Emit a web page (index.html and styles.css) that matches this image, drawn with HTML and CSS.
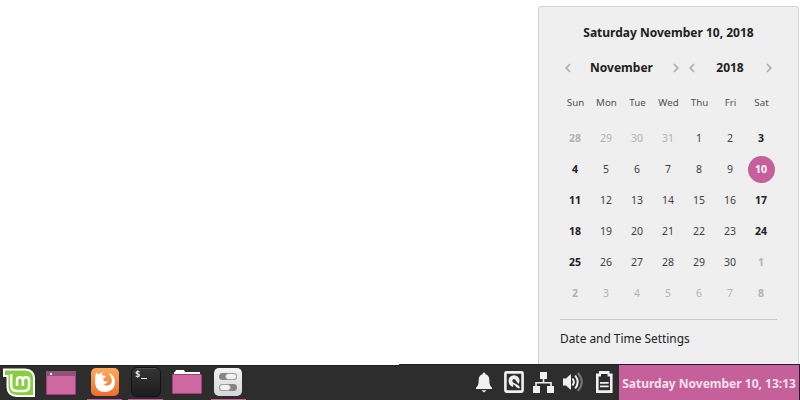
FILE: index.html
```html
<!DOCTYPE html>
<html lang="en">
<head>
<meta charset="utf-8">
<title>Desktop</title>
<link rel="stylesheet" href="styles.css">
</head>
<body>
<main class="desktop">
  <section class="calendar">
    <h1 class="today">Saturday November 10, 2018</h1>
    <div class="pickers">
      <div class="picker month">
        <svg class="chev" viewBox="0 0 6 10"><path d="M5 1 1.2 5 5 9"/></svg>
        <span>November</span>
        <svg class="chev" viewBox="0 0 6 10"><path d="M1 1 4.8 5 1 9"/></svg>
      </div>
      <div class="picker year">
        <svg class="chev" viewBox="0 0 6 10"><path d="M5 1 1.2 5 5 9"/></svg>
        <span>2018</span>
        <svg class="chev" viewBox="0 0 6 10"><path d="M1 1 4.8 5 1 9"/></svg>
      </div>
    </div>
    <div class="weekdays">
      <span>Sun</span><span>Mon</span><span>Tue</span><span>Wed</span><span>Thu</span><span>Fri</span><span>Sat</span>
    </div>
    <div class="days">
      <b class="other">28</b><span class="other">29</span><span class="other">30</span><span class="other">31</span><span>1</span><span>2</span><b>3</b>
      <b>4</b><span>5</span><span>6</span><span>7</span><span>8</span><span>9</span><b class="selected">10</b>
      <b>11</b><span>12</span><span>13</span><span>14</span><span>15</span><span>16</span><b>17</b>
      <b>18</b><span>19</span><span>20</span><span>21</span><span>22</span><span>23</span><b>24</b>
      <b>25</b><span>26</span><span>27</span><span>28</span><span>29</span><span>30</span><b class="other">1</b>
      <b class="other">2</b><span class="other">3</span><span class="other">4</span><span class="other">5</span><span class="other">6</span><span class="other">7</span><b class="other">8</b>
    </div>
    <div class="settings">Date and Time Settings</div>
  </section>
</main>
<footer class="taskbar">
  <div class="launchers">
    <svg viewBox="0 0 40 35" width="40" height="35">
      <path d="M3 3.5H25Q35 4 35 13V32H17Q6.5 31.5 6.5 22V12H3Z" fill="#fff"/>
      <path d="M5 5.5H25Q33 6 33 13V30H17Q8.5 29.5 8.5 22V10H5Z" fill="#87cf3e"/>
      <path d="M11.2 9V20.5Q11.2 26 17 26H24Q29 26 29 21V15.5Q29 12.3 26 12.3T22.9 15.5V21M22.9 15.5Q22.9 12.3 20 12.3T17 15.5V21" fill="none" stroke="#fff" stroke-width="2.5"/>
    </svg>
    <svg viewBox="0 0 43 35" width="43" height="35">
      <path d="M6.5 6.5H35.5V29.5H6.5Z" fill="#cd69a0" stroke="#a23c76"/>
      <path d="M6 6H36V11H6Z" fill="#92507a"/><path d="M10 8H12V10H10Z" fill="#fff"/>
    </svg>
    <svg class="running" viewBox="0 0 42 34" width="42" height="34">
      <defs><linearGradient id="orange" x2="0" y2="1"><stop stop-color="#ffac59"/><stop offset="1" stop-color="#ed6d2f"/></linearGradient></defs>
      <rect x="8" y="3" width="28" height="28" rx="5" fill="url(#orange)"/>
      <path d="M13 7.3 15.6 9.4Q17.4 7.8 20 7.5Q18.8 9 19.2 10.5L23 11Q23 12.4 20.4 13.2Q20 16 22.5 16.6L25 16.5Q23.5 19 20.5 19Q23.5 22 27 19.5Q30 17 28 12.2L25.8 7.7Q32.2 10.5 32 17.5Q31.5 26.7 22 27Q12.7 26.8 12 17.4Q11.8 12.5 13 7.3Z" fill="#fff"/>
    </svg>
    <svg class="running" viewBox="0 0 41 34" width="41" height="34">
      <defs><linearGradient id="black" x2="0" y2="1"><stop stop-color="#353535"/><stop offset="1" stop-color="#1c1c1c"/></linearGradient></defs>
      <rect x="6.5" y="2.5" width="29" height="29" rx="5.5" fill="url(#black)" stroke="#111"/>
      <path d="M11 3.5H31" stroke="#505050"/>
      <text x="10" y="12" class="prompt">$</text><path d="M16 13.5H22" stroke="#eee"/>
    </svg>
    <svg viewBox="0 0 41 35" width="41" height="35">
      <path d="M8 12V7H9L10 5H18L19 7H34V12Z" fill="#fff"/>
      <path d="M6.5 9.5H35.5V28.5H6.5Z" fill="#cd69a0" stroke="#a83b79" stroke-linejoin="round"/>
    </svg>
    <svg class="running" viewBox="0 0 42 34" width="42" height="34">
      <defs><linearGradient id="silver" x2="0" y2="1"><stop stop-color="#f3f3f3"/><stop offset="1" stop-color="#d7d7d7"/></linearGradient></defs>
      <rect x="7" y="3" width="28" height="28" rx="5" fill="url(#silver)"/>
      <rect x="12" y="8" width="18" height="7" rx="3.5" fill="#858585"/><rect x="18.5" y="8.5" width="11" height="6" rx="3" fill="#f2f2f2" stroke="#929292" stroke-width=".7"/>
      <rect x="12" y="19" width="18" height="7" rx="3.5" fill="#858585"/><rect x="12.5" y="19.5" width="11" height="6" rx="3" fill="#f2f2f2" stroke="#929292" stroke-width=".7"/>
    </svg>
  </div>
  <div class="tray">
    <svg viewBox="0 0 30 35" width="30" height="35" fill="#f0f0f0">
      <path d="M15 7.5Q16.5 7.5 16.5 9.3Q20.3 10.4 20.3 15Q20.3 21 23 22.5V24H7V22.5Q9.7 21 9.7 15Q9.7 10.4 13.5 9.3Q13.5 7.5 15 7.5ZM12.3 25.3H17.7L15 27.5Z"/>
    </svg>
    <svg viewBox="0 0 30 35" width="30" height="35">
      <rect x="6.4" y="7.4" width="17.2" height="19.2" rx="1" fill="none" stroke="#f0f0f0" stroke-width="2.6"/>
      <path d="M14 22Q9.5 20.5 9.5 15.5Q10 10.5 15 10.2Q20 10.5 20.6 15.5Q20.3 17.5 19.5 19L16 14.5Q14.5 13.5 13.5 15Q13 16.5 14.2 17.5L19.7 20.5L21 22.7L20 23.5L17.5 22.3L14.5 19Z" fill="#f0f0f0"/>
    </svg>
    <svg viewBox="0 0 30 35" width="30" height="35">
      <path d="M11 7H18V14H11ZM4 21H11V28H4ZM18 21H25V28H18Z" fill="#f0f0f0"/>
      <path d="M14.5 12V18M7 22V17.8H22V22" fill="none" stroke="#f0f0f0" stroke-width="1.6"/>
    </svg>
    <svg viewBox="0 0 30 35" width="30" height="35" fill="none" stroke="#f0f0f0" stroke-width="2">
      <path d="M4 13.5H7L12 9V25L7 20.5H4Z" fill="#f0f0f0" stroke="none"/>
      <path d="M13.5 13.5Q16.2 17 13.5 20.5M16.2 10.5Q21.2 17 16.2 23.5"/><path d="M18.8 8Q26.8 17 18.8 26" stroke="#777"/>
    </svg>
    <svg viewBox="0 0 30 35" width="30" height="35" fill="#f0f0f0">
      <path fill-rule="evenodd" d="M10 6H20.5V8.5H23.6V28H7V8.5H10ZM9.6 11.5V25.3H21V11.5H18.5V9H12V11.5Z"/>
      <path d="M11 17H19.7V18.7H11ZM11 20.5H19.7V22.2H11Z"/>
    </svg>
  </div>
  <div class="clock">Saturday November 10, 13:13</div>
</footer>
</body>
</html>
```
FILE: styles.css
```css
* { box-sizing: border-box; }
body {
  margin: 0;
  width: 800px;
  height: 400px;
  overflow: hidden;
  display: flex;
  flex-direction: column;
  background: #fff;
  font-family: "Noto Sans", sans-serif;
}
.desktop {
  height: 364px;
  padding: 6px 1px 0 0;
  display: flex;
  justify-content: flex-end;
}
.calendar {
  width: 261px;
  height: 358px;
  padding: 16px 21px 0;
  background: #efefef;
  border: 1px solid #d3d3d3;
  border-bottom: 0;
  border-radius: 3px 3px 0 0;
  color: #202020;
}
.today {
  margin: 0;
  font-size: 12px;
  line-height: 20px;
  text-align: center;
  white-space: nowrap;
}
.pickers {
  height: 20px;
  margin-top: 15px;
  display: flex;
  gap: 10px;
  padding: 0 5px;
  font-size: 12px;
  line-height: 20px;
  font-weight: bold;
}
.picker {
  display: flex;
  justify-content: space-between;
  align-items: center;
}
.picker span { margin-left: -1px; }
.month { width: 114px; }
.year { width: 83px; }
.chev {
  width: 6px;
  height: 10px;
  fill: none;
  stroke: #adadad;
  stroke-width: 1.7;
}
.weekdays, .days {
  display: grid;
  grid-template-columns: repeat(7, 31px);
  text-align: center;
}
.weekdays {
  margin-top: 15px;
  font-size: 9.75px;
  line-height: 20px;
  color: #505050;
}
.days {
  margin-top: 10px;
  grid-auto-rows: 31px;
  font-size: 10.5px;
  line-height: 31px;
  color: #404040;
}
.days > * { padding-right: 1px; }
.days b { color: #202020; }
.days .other { color: #b2b2b2; }
.days .selected {
  width: 27px;
  height: 27px;
  margin: 2px 0 0 2px;
  border-radius: 50%;
  line-height: 27px;
  background: #c6609a;
  color: #fff;
}
.settings {
  margin-top: 10px;
  padding-top: 8px;
  border-top: 1px solid #cbcbcb;
  font-size: 11.9px;
  line-height: 20px;
}
.taskbar {
  height: 36px;
  display: flex;
  background: linear-gradient(#fff, #fff) 0 0 / 399px 1px no-repeat, #2d2d2d;
  border-right: 1px solid #222;
}
.taskbar svg { display: block; flex: none; }
.launchers {
  width: 399px;
  height: 35px;
  margin-top: 1px;
  display: flex;
  border-top: 1px solid #202020;
}
.launchers svg { margin-top: -1px; }
.launchers .running {
  height: 35px;
  padding-bottom: 1px;
  background: linear-gradient(#c6609a, #c6609a) 50% 100% / 35px 1px no-repeat;
}
.tray {
  width: 220px;
  padding-left: 70px;
  display: flex;
  border-top: 1px solid #202020;
}
.clock {
  width: 180px;
  border-top: 1px solid #202020;
  padding-top: 1px;
  background: #c6609a;
  color: #f3e1ec;
  font-size: 12px;
  line-height: 35px;
  font-weight: bold;
  text-align: center;
  white-space: nowrap;
}
.prompt {
  font: bold 9px "DejaVu Sans Mono", monospace;
  fill: #eee;
}
```
